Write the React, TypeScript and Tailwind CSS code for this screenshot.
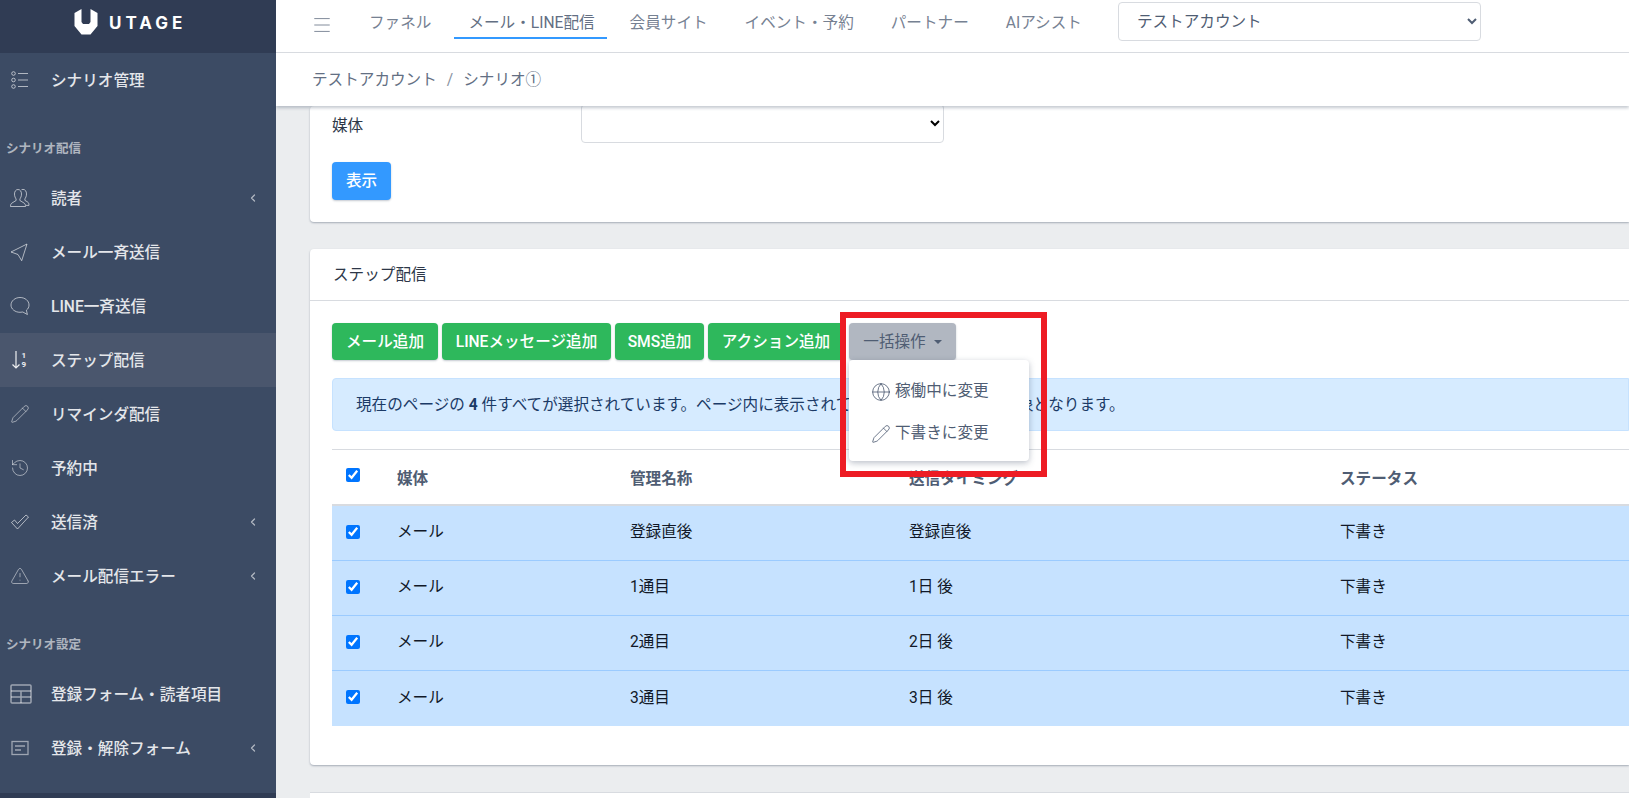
import { ChevronLeft, Globe, History, Menu, Pencil, TriangleAlert } from 'lucide-react';
import type { ReactNode } from 'react';

const iconClass = 'h-[20px] w-[20px] text-white/60';

const ListIcon = () => (
  <svg viewBox="0 0 20 20" className={iconClass} fill="none" stroke="currentColor" strokeWidth="1">
    <circle cx="3.5" cy="3.5" r="1.8" />
    <circle cx="3.5" cy="10" r="1.8" />
    <circle cx="3.5" cy="16.5" r="1.8" />
    <path d="M8 3.5h10M8 10h10M8 16.5h10" />
  </svg>
);

const UsersIcon = () => (
  <svg viewBox="0 0 20 20" className={iconClass} fill="none" stroke="currentColor" strokeWidth="1">
    <path d="M4.500 6c0-2.500 1.300-4.500 3.500-4.500s3.500 2 3.500 4.500-1 4-1.600 5v1.500l4.100 2.500c1 .7 1.500 1.500 1.500 3.500H.500c0-2 .5-2.800 1.500-3.500l4.100-2.500V11c-.6-1-1.600-2.500-1.600-5z" strokeLinejoin="round" />
    <path d="M11.500 1.700c.4-.2.900-.3 1.500-.3 2.200 0 3.500 2 3.500 4.500s-1 4-1.600 5v1.500l2.600 1.500c1 .7 1.500 1.500 1.500 3.500h-3" strokeLinejoin="round" />
  </svg>
);

const SendIcon = () => (
  <svg viewBox="0 0 20 20" className={iconClass} fill="none" stroke="currentColor" strokeWidth="1">
    <path d="M17 2 1 10l7 2.500 3.700 6.200z" strokeLinejoin="round" />
  </svg>
);

const BubbleIcon = () => (
  <svg viewBox="0 0 20 20" className={iconClass} fill="none" stroke="currentColor" strokeWidth="1">
    <path d="M10 1.500c5 0 9 3.200 9 7.500 0 2.200-1 4-2.600 5.200l1 4.300-4.600-2.500c-.9.2-1.800.3-2.800.3-5 0-9-3.300-9-7.300s4-7.500 9-7.500z" strokeLinejoin="round" />
  </svg>
);

const SortIcon = () => (
  <svg viewBox="0 0 20 20" className="h-[20px] w-[20px] text-white/90" fill="none" stroke="currentColor">
    <path d="M6 1v17M2.500 14.500 6 18l3.500-3.500" strokeWidth="1.200" />
    <text x="11.500" y="8" fontSize="8" fontWeight="700" fill="currentColor" stroke="none" fontFamily="Roboto, sans-serif">1</text>
    <text x="11.500" y="17" fontSize="8" fontWeight="700" fill="currentColor" stroke="none" fontFamily="Roboto, sans-serif">9</text>
  </svg>
);

const CheckIcon = () => (
  <svg viewBox="0 0 20 20" className={iconClass} fill="none" stroke="currentColor" strokeWidth="1">
    <path d="m1.500 10.500 3-2.500 3 3.500L16 3l2.500 2-11 12z" strokeLinejoin="round" />
  </svg>
);

const TableIcon = () => (
  <svg viewBox="0 0 22 20" className="h-[20px] w-[22px] text-white/50" fill="none" stroke="currentColor" strokeWidth="1.500">
    <rect x="1" y="1" width="20" height="18" rx="1" />
    <path d="M1 7h20M1 13h20M11 7v12" />
  </svg>
);

const FormIcon = () => (
  <svg viewBox="0 0 20 20" className="h-[20px] w-[20px] text-white/50" fill="none" stroke="currentColor" strokeWidth="1.300">
    <rect x="2" y="3.500" width="16" height="13" />
    <path d="M5 8h10M5 12h6" />
  </svg>
);

const Logo = () => (
  <svg viewBox="0 0 24 26" className="h-[26px] w-[24px]" fill="#fff">
    <path d="M7.500 0 .5 4v13l7 8.500h9l7-8.500V4l-7-4v13L15 15H9l-1.500-2z" />
  </svg>
);

type Item = { label: string; icon: ReactNode; arrow?: boolean; active?: boolean };

const firstGroup: Item[] = [
  { label: '読者', icon: <UsersIcon />, arrow: true },
  { label: 'メール一斉送信', icon: <SendIcon /> },
  { label: 'LINE一斉送信', icon: <BubbleIcon /> },
  { label: 'ステップ配信', icon: <SortIcon />, active: true },
  { label: 'リマインダ配信', icon: <Pencil size={20} strokeWidth={1} className="text-white/60" /> },
  { label: '予約中', icon: <History size={20} strokeWidth={1} className="text-white/60" /> },
  { label: '送信済', icon: <CheckIcon />, arrow: true },
  { label: 'メール配信エラー', icon: <TriangleAlert size={20} strokeWidth={1} className="text-white/60" />, arrow: true },
];

const secondGroup: Item[] = [
  { label: '登録フォーム・読者項目', icon: <TableIcon /> },
  { label: '登録・解除フォーム', icon: <FormIcon />, arrow: true },
];

const SideItem = ({ label, icon, arrow, active }: Item) => (
  <div className={`flex h-[54px] shrink-0 items-center pl-[10px] pr-[17px] font-medium text-[#e4e6ea] ${active ? 'bg-[#4a566d]' : ''}`}>
    <span className="flex w-[41px] shrink-0 items-center">{icon}</span>
    <span className="flex-1 pt-[3px]">{label}</span>
    {arrow && <ChevronLeft size={12} strokeWidth={2.500} className="text-white/60" />}
  </div>
);

const SectionLabel = ({ children }: { children: ReactNode }) => (
  <div className="flex h-[64px] shrink-0 items-end pb-[12px] pl-[6px] text-[12.500px] font-bold text-white/60">{children}</div>
);

const Sidebar = () => (
  <aside className="flex h-full w-[276px] shrink-0 flex-col bg-[#3c4b64]">
    <div className="flex h-[53px] shrink-0 items-start gap-[11px] bg-[#303c54] pl-[74px] pt-[9px]">
      <Logo />
      <span className="mt-[2px] text-[17px] font-bold tracking-[4px] text-white [font-family:Inter,sans-serif]">UTAGE</span>
    </div>
    <div className="flex flex-1 flex-col overflow-hidden">
      <SideItem label="シナリオ管理" icon={<ListIcon />} />
      <SectionLabel>シナリオ配信</SectionLabel>
      {firstGroup.map((item) => (
        <SideItem key={item.label} {...item} />
      ))}
      <SectionLabel>シナリオ設定</SectionLabel>
      {secondGroup.map((item) => (
        <SideItem key={item.label} {...item} />
      ))}
    </div>
    <div className="h-[5px] shrink-0 bg-[#303c54]" />
  </aside>
);

const navItems = ['ファネル', 'メール・LINE配信', '会員サイト', 'イベント・予約', 'パートナー', 'AIアシスト'];

const TopBar = () => (
  <div className="relative z-20 bg-white shadow-[0_2px_3px_rgba(60,75,100,0.3)]">
    <div className="flex h-[53px] items-start border-b border-[#d8dbe0] text-[#768192]">
      <Menu size={22} strokeWidth={1} className="ml-[35px] mt-[14px] h-[22px] w-[22px] shrink-0 text-[#768192]" />
      <nav className="ml-[22px] flex h-full items-start">
        {navItems.map((name) => (
          <a
            key={name}
            className={`mr-[9px] h-[39px] pl-[14px] pt-[11px] leading-[24px] ${name === 'メール・LINE配信' ? 'border-b-2 border-[#39f] pr-[12px] text-[#636f83]' : 'pr-[14px]'}`}
          >
            {name}
          </a>
        ))}
      </nav>
      <select className="ml-[13px] mt-[2px] h-[39px] w-[363px] rounded border border-[#d8dbe0] bg-white pl-[14px] pr-[4px] text-[#4f5d73]">
        <option>テストアカウント</option>
      </select>
    </div>
    <div className="flex h-[53px] items-center pl-[36px] pt-[2px] text-[#636f83]">
      <span>テストアカウント</span>
      <span className="mx-[10px] text-[#8a93a2]">/</span>
      <span>シナリオ①</span>
    </div>
  </div>
);

const rows = [
  { name: '登録直後', timing: '登録直後' },
  { name: '1通目', timing: '1日 後' },
  { name: '2通目', timing: '2日 後' },
  { name: '3通目', timing: '3日 後' },
];

const StepTable = () => (
  <table className="mt-[18px] w-full table-fixed border-collapse border-t border-[#d8dbe0]">
    <colgroup>
      <col className="w-[54px]" />
      <col className="w-[232px]" />
      <col className="w-[279px]" />
      <col className="w-[431px]" />
      <col />
    </colgroup>
    <thead>
      <tr className="h-[55px] border-b-2 border-[#d8dbe0] text-left text-[#4f5d73]">
        <th className="pl-[14px] pb-[4px] align-middle">
          <input type="checkbox" defaultChecked className="block h-[14px] w-[14px]" />
        </th>
        <th className="pl-[11px] pt-[5px] font-bold">媒体</th>
        <th className="pl-[12px] pt-[5px] font-bold">管理名称</th>
        <th className="pl-[12px] pt-[5px] font-bold">送信タイミング</th>
        <th className="pl-[12px] pt-[5px] font-bold">ステータス</th>
      </tr>
    </thead>
    <tbody className="text-[#111827]">
      {rows.map((row) => (
        <tr key={row.name} className="h-[55px] border-b border-[#9bcbff] bg-[#c6e2ff] first:h-[56px] last:border-b-0">
          <td className="pl-[14px] pb-[2px]">
            <input type="checkbox" defaultChecked className="block h-[14px] w-[14px]" />
          </td>
          <td className="pl-[11px]">メール</td>
          <td className="pl-[12px]">{row.name}</td>
          <td className="pl-[12px]">{row.timing}</td>
          <td className="pl-[12px]">下書き</td>
        </tr>
      ))}
    </tbody>
  </table>
);

const BulkMenu = () => (
  <div className="relative ml-[1px]">
    <button className="flex h-[37px] w-[107px] items-center justify-center gap-[8px] rounded bg-[#b1b7c1] text-[#4f5d73] shadow-[0_1px_2px_rgba(60,75,100,0.3)]">
      <span className="pt-[3px]">一括操作</span>
      <span className="h-0 w-0 border-x-[4px] border-t-[4px] border-x-transparent border-t-[#4f5d73]" />
    </button>
    <div className="absolute left-0 top-[37px] z-10 flex h-[101px] w-[180px] flex-col justify-center gap-[6px] rounded bg-white pt-[4px] text-[#4f5d73] shadow-[0_2px_6px_rgba(60,75,100,0.35)]">
      <div className="flex h-[36px] items-center gap-[4px] pl-[22px]">
        <Globe size={20} strokeWidth={1} />
        稼働中に変更
      </div>
      <div className="flex h-[36px] items-center gap-[4px] pl-[22px]">
        <Pencil size={20} strokeWidth={1} />
        下書きに変更
      </div>
    </div>
    <div className="pointer-events-none absolute left-[-9px] top-[-11px] z-20 h-[165px] w-[207px] border-[6px] border-[#ed1c24]" />
  </div>
);

const actions = [
  { label: 'メール追加', width: 'w-[106px]' },
  { label: 'LINEメッセージ追加', width: 'w-[169px]' },
  { label: 'SMS追加', width: 'w-[89px]' },
  { label: 'アクション追加', width: 'w-[136px]' },
];

const Card = ({ className, children }: { className: string; children: ReactNode }) => (
  <section className={`rounded-l bg-white shadow-[0_1px_2px_rgba(60,75,100,0.4)] ${className}`}>{children}</section>
);

const Content = () => (
  <div className="flex-1 overflow-hidden bg-[#ebedef] pl-[34px]">
    <Card className="h-[116px] pl-[22px]">
      <div className="flex items-start">
        <label className="mt-[9px] w-[249px] text-[#2d3748]">媒体</label>
        <select className="-mt-[2px] h-[39px] w-[363px] rounded border border-[#d8dbe0] bg-white" />
      </div>
      <button className="mt-[19px] h-[38px] w-[59px] rounded bg-[#39f] pt-[1px] font-medium text-white shadow-[0_1px_2px_rgba(60,75,100,0.3)]">表示</button>
    </Card>
    <Card className="mt-[27px] h-[516px]">
      <div className="flex h-[52px] items-center border-b border-[#d8dbe0] pl-[23px] pt-[2px] text-[#2d3748]">ステップ配信</div>
      <div className="pl-[22px] pt-[22px]">
        <div className="flex gap-[4px]">
          {actions.map((action) => (
            <button key={action.label} className={`h-[37px] rounded bg-[#2eb85c] pt-[3px] font-medium text-white shadow-[0_1px_2px_rgba(60,75,100,0.3)] ${action.width}`}>
              {action.label}
            </button>
          ))}
          <BulkMenu />
        </div>
        <div className="mt-[18px] flex h-[53px] items-center rounded-l border border-[#c6e2ff] bg-[#d6ebff] pl-[23px] pt-[2px] text-[#1b3a66]">
          <span>
            現在のページの <b>4</b> 件すべてが選択されています。ページ内に表示されている<span className="tracking-[-0.5px]">メッセージのみが対象</span>となります。
          </span>
        </div>
        <StepTable />
      </div>
    </Card>
    <div className="mt-[27px] h-[8px] border-t border-[#d8dbe0] bg-white" />
  </div>
);

export default function App() {
  return (
    <div className="flex h-[798px] w-[1629px] overflow-hidden bg-[#ebedef] text-[15.600px] [font-family:Roboto,'Noto_Sans_CJK_JP',sans-serif]">
      <Sidebar />
      <main className="flex min-w-0 flex-1 flex-col">
        <TopBar />
        <Content />
      </main>
    </div>
  );
}
